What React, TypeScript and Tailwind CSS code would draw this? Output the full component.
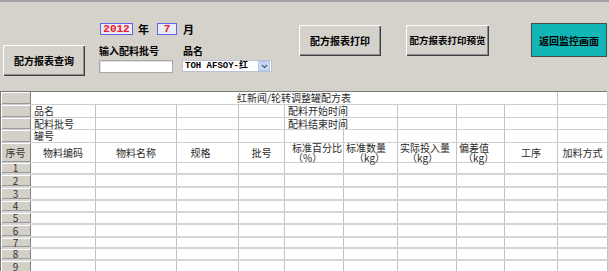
import React from "react";

// column widths (px), row header first
const cols = [30, 65, 81, 62, 46, 59, 54, 59, 48, 53, 50];
const dataRowHeights = [12, 13, 13, 12, 12, 13, 11, 12, 14];

const bevel =
  "bg-[#d5d2cc] shadow-[inset_1px_1px_0_#ffffff,inset_-1px_-1px_0_#404040,inset_-2px_-2px_0_#8c8c8c]";

function RowHead({ children }: { children?: React.ReactNode }) {
  return (
    <div className="w-[30px] shrink-0 h-full flex items-center justify-center bg-[#d4d0c8] border-r border-[#808080] shadow-[inset_1px_1px_0_#ffffff,inset_0_-1px_0_#9a9a9a] text-[10px] text-[#333]">
      {children}
    </div>
  );
}

function Cell({
  w,
  children,
  className = "",
}: {
  w: number;
  children?: React.ReactNode;
  className?: string;
}) {
  return (
    <div
      className={`shrink-0 h-full border-r border-[#c4c4c4] flex items-center overflow-visible whitespace-nowrap ${className}`}
      style={{ width: w }}
    >
      {children}
    </div>
  );
}

function InfoRow({
  h,
  label,
  label2,
}: {
  h: number;
  label?: string;
  label2?: string;
}) {
  return (
    <div className="flex border-b border-[#cfcfcf]" style={{ height: h }}>
      <RowHead />
      <Cell w={cols[1]} className="pl-[3px]">
        {label}
      </Cell>
      <Cell w={cols[2]} />
      <Cell w={cols[3]} />
      <Cell w={cols[4]} />
      <Cell w={cols[5]} className="pl-[3px] relative z-10">
        {label2}
      </Cell>
      <Cell w={cols[6]} />
      <Cell w={cols[7]} />
      <Cell w={cols[8]} />
      <Cell w={cols[9]} />
      <Cell w={cols[10]} />
    </div>
  );
}

function TwoLine({ a, b, indent }: { a: string; b: string; indent: number }) {
  return (
    <div className="flex flex-col leading-[10px] pl-[2px]">
      <span>{a}</span>
      <span style={{ paddingLeft: indent }}>{b}</span>
    </div>
  );
}

export default function App() {
  return (
    <div className="w-[609px] h-[271px] overflow-hidden bg-[#d5d2cc] font-['Noto_Sans_CJK_SC','Liberation_Sans',sans-serif] text-black">
      <div className="h-[2px] bg-[#a3a3a3]" />

      {/* top controls */}
      <div className="h-[89px] flex items-start">
        <button
          className={`ml-[3px] mt-[43px] w-[82px] h-[31px] ${bevel} text-[10px] font-bold tracking-[0px]`}
        >
          配方报表查询
        </button>

        <div className="ml-[14px] mt-[21px] flex flex-col">
          <div className="flex items-center h-[12px]">
            <div className="ml-[1px] w-[33px] h-[12px] border border-[#6464e6] bg-[#ecebf2] flex items-center justify-center text-[11px] font-bold text-[#e8202a] font-['Liberation_Mono',monospace]">
              2012
            </div>
            <span className="ml-[5px] text-[11px] font-bold">年</span>
            <div className="ml-[8px] w-[20px] h-[12px] border border-[#6464e6] bg-[#ecebf2] flex items-center justify-center text-[11px] font-bold text-[#e8202a] font-['Liberation_Mono',monospace]">
              7
            </div>
            <span className="ml-[6px] text-[11px] font-bold">月</span>
          </div>
          <div className="flex mt-[10px]">
            <div className="flex flex-col w-[83px]">
              <span className="text-[10px] font-bold leading-[11px]">输入配料批号</span>
              <div className="mt-[4px] w-[74px] h-[13px] bg-white border border-[#a8a8a8] shadow-[inset_1px_1px_0_#e0e0e0]" />
            </div>
            <div className="flex flex-col">
              <span className="ml-[1px] text-[10px] font-bold leading-[11px]">品名</span>
              <div className="mt-[4px] w-[90px] h-[12px] bg-white border border-[#b9c2d4] flex items-center">
                <span className="ml-[2px] flex-1 text-[9px] font-bold font-['Liberation_Mono','Noto_Sans_CJK_SC',monospace] leading-none">
                  TOH AFSOY-红
                </span>
                <div className="w-[12px] h-[10px] mr-[1px] bg-[#c9d8f4] border border-[#b4c6ea] flex items-center justify-center">
                  <svg width="7" height="5" viewBox="0 0 7 5">
                    <path d="M1 1 L3.5 3.5 L6 1" stroke="#4d6185" strokeWidth="1.3" fill="none" />
                  </svg>
                </div>
              </div>
            </div>
          </div>
        </div>

        <button
          className={`ml-[27px] mt-[23px] w-[82px] h-[31px] ${bevel} text-[10px] font-bold`}
        >
          配方报表打印
        </button>
        <button
          className={`ml-[25px] mt-[23px] w-[83px] h-[31px] ${bevel} text-[9.5px] font-bold`}
        >
          配方报表打印预览
        </button>
        <button className="ml-[42px] mt-[21px] w-[76px] h-[34px] bg-[#12b6b6] border border-[#4a4a4a] text-[10px] font-bold">
          返回监控画面
        </button>
      </div>

      {/* report grid */}
      <div className="w-[607px] border-t border-l border-[#7a7a7a] bg-white text-[10px] leading-none text-[#2a2a2a]">
        <div className="flex h-[13px] border-b border-[#cfcfcf]">
          <RowHead />
          <Cell w={527} className="justify-center">
            红新闻/轮转调整罐配方表
          </Cell>
          <Cell w={cols[10]} />
        </div>
        <InfoRow h={13} label="品名" label2="配料开始时间" />
        <InfoRow h={12} label="配料批号" label2="配料结束时间" />
        <InfoRow h={13} label="罐号" />

        <div className="flex h-[20px] border-b border-[#cfcfcf]">
          <RowHead>序号</RowHead>
          <Cell w={cols[1]} className="justify-center">物料编码</Cell>
          <Cell w={cols[2]} className="justify-center">物料名称</Cell>
          <Cell w={cols[3]} className="justify-center pr-[14px]">规格</Cell>
          <Cell w={cols[4]} className="justify-center">批号</Cell>
          <Cell w={cols[5]} className="pl-[5px]">
            <TwoLine a="标准百分比" b="（%）" indent={1} />
          </Cell>
          <Cell w={cols[6]}>
            <TwoLine a="标准数量" b="（kg）" indent={8} />
          </Cell>
          <Cell w={cols[7]}>
            <TwoLine a="实际投入量" b="（kg）" indent={7} />
          </Cell>
          <Cell w={cols[8]}>
            <TwoLine a="偏差值" b="（kg）" indent={4} />
          </Cell>
          <Cell w={cols[9]} className="justify-center">工序</Cell>
          <Cell w={cols[10]} className="justify-center">加料方式</Cell>
        </div>

        {dataRowHeights.map((h, i) => (
          <div key={i} className="flex border-b-2 border-[#d6d6d6]" style={{ height: h }}>
            <RowHead>{i + 1}</RowHead>
            {cols.slice(1).map((w, j) => (
              <Cell key={j} w={w} />
            ))}
          </div>
        ))}
      </div>
    </div>
  );
}
